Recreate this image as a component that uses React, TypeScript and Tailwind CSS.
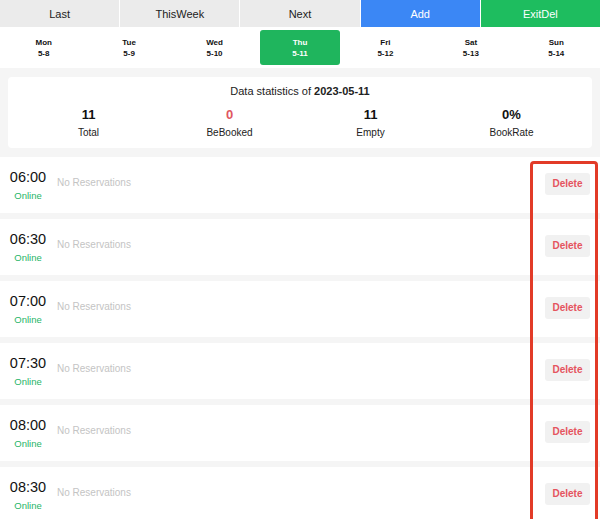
const ACTIONS = [
  { label: 'Last', cls: 'bg-[#ebebeb] text-[#222]' },
  { label: 'ThisWeek', cls: 'bg-[#ebebeb] text-[#222]' },
  { label: 'Next', cls: 'bg-[#ebebeb] text-[#222]' },
  { label: 'Add', cls: 'bg-[#3b87f5] text-white' },
  { label: 'ExitDel', cls: 'bg-[#1ebd5f] text-white' },
];

const DAYS = [
  { name: 'Mon', date: '5-8' },
  { name: 'Tue', date: '5-9' },
  { name: 'Wed', date: '5-10' },
  { name: 'Thu', date: '5-11', active: true },
  { name: 'Fri', date: '5-12' },
  { name: 'Sat', date: '5-13' },
  { name: 'Sun', date: '5-14' },
];

const STATS = [
  { value: '11', label: 'Total' },
  { value: '0', label: 'BeBooked', red: true },
  { value: '11', label: 'Empty' },
  { value: '0%', label: 'BookRate' },
];

const SLOTS = ['06:00', '06:30', '07:00', '07:30', '08:00', '08:30'];

function SlotRow({ time }: { time: string }) {
  return (
    <div className="flex h-[56px] shrink-0 items-center bg-white pl-[10px] pr-[10px]">
      <div className="flex w-[36px] flex-col items-center">
        <span className="text-[14.5px] leading-[19px] text-[#111]">{time}</span>
        <span className="mt-[2px] text-[9.5px] leading-[13px] text-[#27b567]">Online</span>
      </div>
      <span className="ml-[11px] mb-[4px] flex-1 text-[10px] text-[#c4c4c4]">No Reservations</span>
      <button className="mb-[2px] h-[22px] w-[45px] rounded-[3px] bg-[#f1f1f1] text-[10px] font-bold text-[#e5545e]">
        Delete
      </button>
    </div>
  );
}

export default function App() {
  return (
    <div
      className="relative h-[519px] w-[600px] overflow-hidden bg-[#f5f5f5]"
      style={{ fontFamily: '"Liberation Sans", Arial, sans-serif' }}
    >
      <div className="grid h-[27px] grid-cols-5 gap-px bg-white">
        {ACTIONS.map((a) => (
          <button key={a.label} className={`flex items-center justify-center pt-px text-[11px] ${a.cls}`}>
            {a.label}
          </button>
        ))}
      </div>

      <div className="grid h-[41px] grid-cols-7 bg-white px-[1px] py-[3px]">
        {DAYS.map((d) => (
          <div
            key={d.name}
            className={`mx-[3px] flex flex-col items-center justify-center rounded-[3px] text-[8px] font-bold leading-[11px] ${
              d.active ? 'bg-[#1fb55d] text-white' : 'text-[#111]'
            }`}
          >
            <span>{d.name}</span>
            <span>{d.date}</span>
          </div>
        ))}
      </div>

      <div className="mx-[8px] mt-[9px] rounded-[4px] bg-white px-[10px] pt-[6px] pb-[8px]">
        <p className="text-center text-[11px] text-[#222]">
          Data statistics of <span className="font-bold">2023-05-11</span>
        </p>
        <div className="mt-[6px] grid grid-cols-4">
          {STATS.map((s) => (
            <div key={s.label} className="flex flex-col items-center">
              <span className={`text-[13px] font-bold leading-[18px] ${s.red ? 'text-[#e0575f]' : 'text-[#111]'}`}>
                {s.value}
              </span>
              <span className="mt-[2px] text-[10px] leading-[14px] text-[#222]">{s.label}</span>
            </div>
          ))}
        </div>
      </div>

      <div className="mt-[9px] flex flex-col gap-[6px]">
        {SLOTS.map((t) => (
          <SlotRow key={t} time={t} />
        ))}
      </div>

      {/* annotation box drawn over the delete column */}
      <div className="pointer-events-none absolute top-[161px] left-[530px] h-[380px] w-[68px] rounded-[4px] border-[3px] border-[#e23b28]" />
    </div>
  );
}
